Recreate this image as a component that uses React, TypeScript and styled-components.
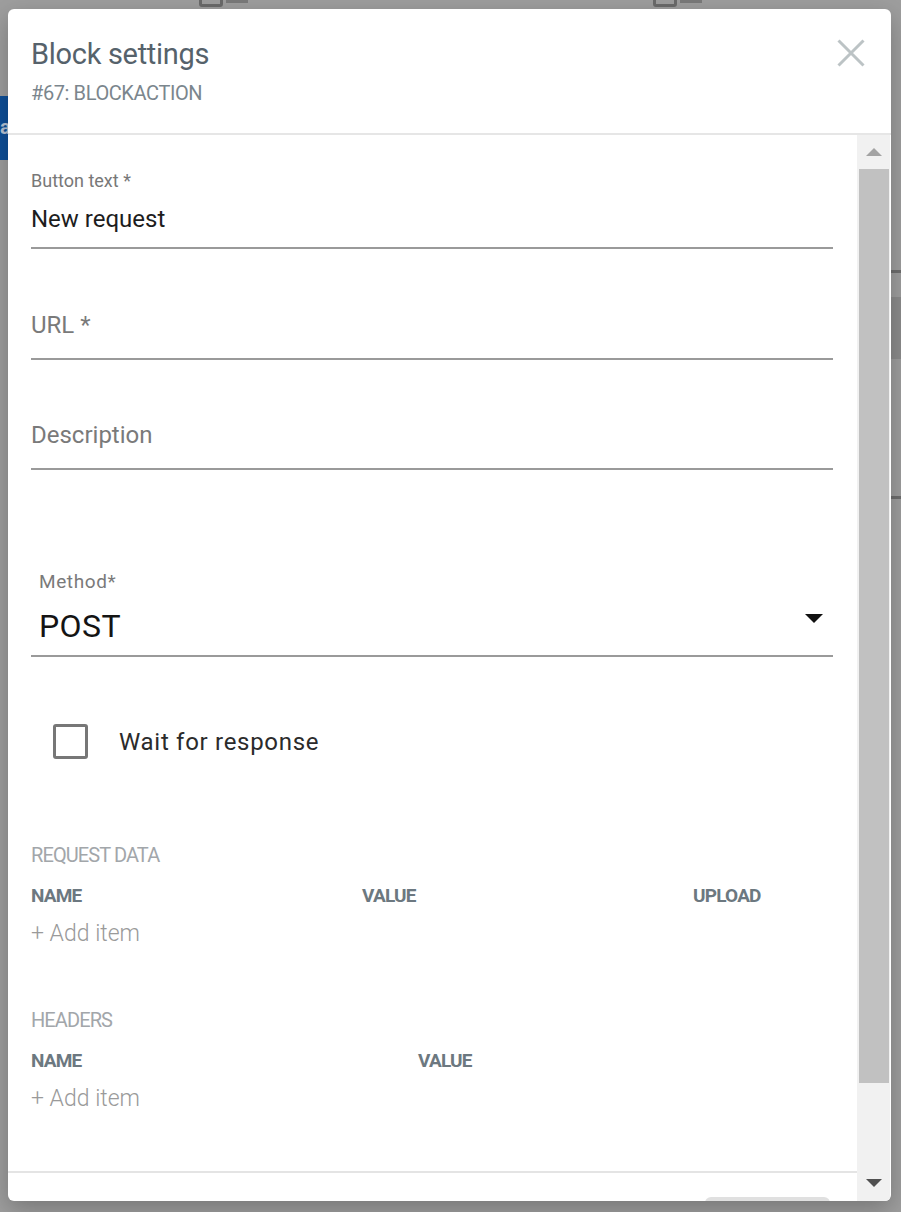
import React from "react";
import styled, { createGlobalStyle } from "styled-components";

const GlobalStyle = createGlobalStyle`
  html, body { margin: 0; padding: 0; }
  body { font-family: Roboto, "Noto Sans", Arial, sans-serif; background: #9e9e9e; }
  * { box-sizing: border-box; }
`;

const Backdrop = styled.div`
  position: relative;
  width: 901px;
  height: 1212px;
  padding: 9px 10px 11px 8px;
  background: #9e9e9e;
  overflow: hidden;
`;

const BehindTab = styled.div`
  position: absolute;
  left: 0;
  top: 96px;
  width: 8px;
  height: 64px;
  background: #0f4f98;
  color: #b9c6d6;
  font: 700 20px/1 Roboto, sans-serif;
  padding-top: 21px;
  overflow: hidden;
  white-space: nowrap;
`;

const BehindIcon = styled.div<{ $left: number }>`
  position: absolute;
  top: -6px;
  left: ${(p) => p.$left}px;
  width: 24px;
  height: 13px;
  border: 3px solid #6a6a6a;
  border-radius: 3px;
  &::after {
    content: "";
    position: absolute;
    left: 24px;
    top: 3px;
    width: 22px;
    height: 3px;
    background: #7a7a7a;
  }
`;

const BehindLine = styled.div<{ $top: number; $h: number; $c: string }>`
  position: absolute;
  right: 0;
  top: ${(p) => p.$top}px;
  width: 10px;
  height: ${(p) => p.$h}px;
  background: ${(p) => p.$c};
`;

const Dialog = styled.div`
  position: relative;
  width: 883px;
  height: 1192px;
  background: #fff;
  border-radius: 6px;
  box-shadow: 0 8px 24px rgba(0, 0, 0, 0.25);
  display: flex;
  flex-direction: column;
  overflow: hidden;
`;

const Header = styled.div`
  height: 126px;
  flex: none;
  display: flex;
  justify-content: space-between;
  align-items: flex-start;
  padding: 27px 26px 0 23px;
  border-bottom: 2px solid #e6e6e6;
`;

const TitleBlock = styled.div`
  display: flex;
  flex-direction: column;
`;

const Title = styled.h2`
  margin: 0;
  font: 400 29px/36px Roboto, sans-serif;
  color: #56626b;
  letter-spacing: -0.3px;
`;

const Subtitle = styled.div`
  margin-top: 9px;
  font: 400 20px/24px Roboto, sans-serif;
  color: #7b868d;
  letter-spacing: -0.4px;
`;

const CloseButton = styled.button`
  margin-top: 3px;
  width: 28px;
  height: 28px;
  padding: 0;
  border: 0;
  background: transparent;
  display: flex;
`;

const Body = styled.div`
  flex: 1;
  display: flex;
  min-height: 0;
`;

const ScrollColumn = styled.div`
  flex: 1;
  display: flex;
  flex-direction: column;
  overflow: hidden;
`;

const Form = styled.div`
  display: flex;
  flex-direction: column;
  padding: 0 24px 0 23px;
  flex: none;
`;

const TextField = styled.div<{ $height: number }>`
  height: ${(p) => p.$height}px;
  display: flex;
  flex-direction: column;
  justify-content: flex-end;
  border-bottom: 2px solid #9a9a9a;
`;

const FieldLabel = styled.div`
  font: 400 18px/22px Roboto, sans-serif;
  color: #787878;
  margin-bottom: 12px;
`;

const FieldValue = styled.div<{ $placeholder?: boolean }>`
  font: 400 24px/30px Roboto, sans-serif;
  color: ${(p) => (p.$placeholder ? "#7a7a7a" : "#1d1d1d")};
  padding-bottom: ${(p) => (p.$placeholder ? 18 : 13)}px;
`;

const SelectField = styled.div`
  height: 187px;
  display: flex;
  flex-direction: column;
  justify-content: flex-end;
  border-bottom: 2px solid #9a9a9a;
  padding-left: 8px;
`;

const SelectLabel = styled.div`
  font: 400 19px/24px Roboto, sans-serif;
  letter-spacing: 0.6px;
  color: #7a7a7a;
  margin-bottom: 13px;
`;

const SelectRow = styled.div`
  display: flex;
  justify-content: space-between;
  align-items: flex-start;
  padding-bottom: 10px;
`;

const SelectValue = styled.div`
  font: 400 32px/38px Roboto, sans-serif;
  color: #141414;
  letter-spacing: 0.4px;
`;

const Arrow = styled.svg`
  margin-top: 7px;
  margin-right: 10px;
`;

const CheckRow = styled.label`
  display: flex;
  align-items: center;
  margin-top: 67px;
  padding-left: 22px;
  gap: 31px;
`;

const CheckBox = styled.span`
  width: 35px;
  height: 35px;
  border: 3px solid #777;
  border-radius: 3px;
  flex: none;
`;

const CheckText = styled.span`
  font: 400 24px/30px Roboto, sans-serif;
  letter-spacing: 0.7px;
  color: #2b2b2b;
`;

const SectionTitle = styled.div<{ $mt: number }>`
  margin-top: ${(p) => p.$mt}px;
  font: 400 20px/24px Roboto, sans-serif;
  letter-spacing: -0.9px;
  color: #a2a6aa;
`;

const ColumnHeads = styled.div<{ $cols: string }>`
  margin-top: 17px;
  display: grid;
  grid-template-columns: ${(p) => p.$cols};
`;

const ColumnHead = styled.div`
  font: 700 19px/24px Roboto, sans-serif;
  letter-spacing: -0.8px;
  color: #6c7880;
`;

const AddItem = styled.button`
  align-self: flex-start;
  margin-top: 12px;
  padding: 0;
  border: 0;
  background: transparent;
  font: 300 23px/28px Roboto, sans-serif;
  color: #9a9a9a;
  text-align: left;
`;

const Footer = styled.div`
  margin-top: 58px;
  flex: none;
  border-top: 2px solid #e4e4e4;
  padding: 24px 27px 0 0;
  display: flex;
  justify-content: flex-end;
`;

const FooterButton = styled.div`
  width: 125px;
  height: 36px;
  border-radius: 6px;
  background: #e0e0e0;
`;

const ScrollBar = styled.div`
  width: 33px;
  margin-right: 1px;
  background: #f1f1f1;
  display: flex;
  flex-direction: column;
  flex: none;
`;

const ScrollArrow = styled.div<{ $h: number }>`
  height: ${(p) => p.$h}px;
  display: flex;
  align-items: center;
  justify-content: center;
  flex: none;
`;

const Thumb = styled.div`
  height: 914px;
  margin: 0 1px 0 2px;
  background: #c1c1c1;
  flex: none;
`;

const Spacer = styled.div`
  flex: 1;
`;

export default function App() {
  return (
    <>
      <GlobalStyle />
      <Backdrop>
        <BehindTab>a</BehindTab>
        <BehindIcon $left={199} />
        <BehindIcon $left={653} />
        <BehindLine $top={270} $h={3} $c="#6e6e6e" />
        <BehindLine $top={297} $h={62} $c="#8c8c8c" />
        <BehindLine $top={496} $h={3} $c="#6e6e6e" />
        <Dialog>
          <Header>
            <TitleBlock>
              <Title>Block settings</Title>
              <Subtitle>#67: BLOCKACTION</Subtitle>
            </TitleBlock>
            <CloseButton aria-label="Close">
              <svg width="28" height="28" viewBox="0 0 28 28">
                <path d="M1.5 1.5 L26.5 26.5 M26.5 1.5 L1.5 26.5" stroke="#bcc3c5" strokeWidth="3" fill="none" />
              </svg>
            </CloseButton>
          </Header>
          <Body>
            <ScrollColumn>
              <Form>
                <TextField $height={114}>
                  <FieldLabel>Button text *</FieldLabel>
                  <FieldValue>New request</FieldValue>
                </TextField>
                <TextField $height={111}>
                  <FieldValue $placeholder>URL *</FieldValue>
                </TextField>
                <TextField $height={110}>
                  <FieldValue $placeholder>Description</FieldValue>
                </TextField>
                <SelectField>
                  <SelectLabel>Method*</SelectLabel>
                  <SelectRow>
                    <SelectValue>POST</SelectValue>
                    <Arrow width="18" height="10" viewBox="0 0 18 10">
                      <path d="M0 0 L18 0 L9 9 Z" fill="#111" />
                    </Arrow>
                  </SelectRow>
                </SelectField>
                <CheckRow>
                  <CheckBox />
                  <CheckText>Wait for response</CheckText>
                </CheckRow>
                <SectionTitle $mt={84}>REQUEST DATA</SectionTitle>
                <ColumnHeads $cols="331px 331px 1fr">
                  <ColumnHead>NAME</ColumnHead>
                  <ColumnHead>VALUE</ColumnHead>
                  <ColumnHead>UPLOAD</ColumnHead>
                </ColumnHeads>
                <AddItem>+ Add item</AddItem>
                <SectionTitle $mt={60}>HEADERS</SectionTitle>
                <ColumnHeads $cols="387px 1fr">
                  <ColumnHead>NAME</ColumnHead>
                  <ColumnHead>VALUE</ColumnHead>
                </ColumnHeads>
                <AddItem>+ Add item</AddItem>
              </Form>
              <Footer>
                <FooterButton />
              </Footer>
            </ScrollColumn>
            <ScrollBar>
              <ScrollArrow $h={34}>
                <svg width="16" height="8" viewBox="0 0 16 8">
                  <path d="M8 0 L16 8 L0 8 Z" fill="#a3a3a3" />
                </svg>
              </ScrollArrow>
              <Thumb />
              <Spacer />
              <ScrollArrow $h={36}>
                <svg width="16" height="8" viewBox="0 0 16 8">
                  <path d="M0 0 L16 0 L8 8 Z" fill="#505050" />
                </svg>
              </ScrollArrow>
            </ScrollBar>
          </Body>
        </Dialog>
      </Backdrop>
    </>
  );
}
